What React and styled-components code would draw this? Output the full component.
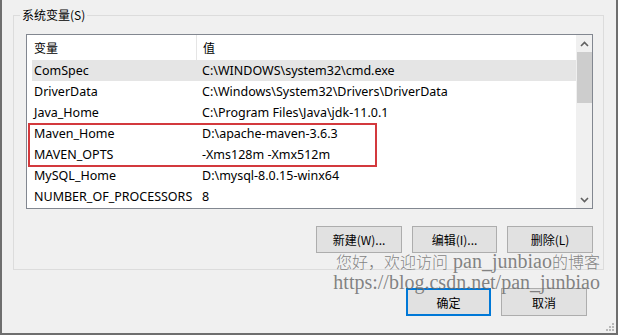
import React from 'react';
import styled, { createGlobalStyle } from 'styled-components';

const GlobalStyle = createGlobalStyle`
  html, body {
    margin: 0;
    padding: 0;
    background: #f0f0f0;
  }
  body {
    font-family: "Noto Sans", "Noto Sans CJK SC", sans-serif;
    font-size: 12px;
    color: #000;
  }
`;

const Window = styled.div`
  position: relative;
  box-sizing: border-box;
  width: 618px;
  height: 335px;
  background: #f0f0f0;
  border: 2px solid #6e6e6e;
  border-top: none;
  display: flex;
  flex-direction: column;
  overflow: hidden;
`;

const Group = styled.fieldset`
  min-width: 0;
  margin: 7px 12px 0 11px;
  padding: 11px 10px 16px 12px;
  border: 1px solid #dcdcdc;
  display: flex;
  flex-direction: column;
`;

const Legend = styled.legend`
  margin-left: -6px;
  padding: 0 2px;
  line-height: 16px;
  font-family: "Noto Sans CJK SC", sans-serif;
  color: #000;
`;

const ListBox = styled.div`
  box-sizing: border-box;
  height: 175px;
  border: 1px solid #828790;
  background: #fff;
  display: flex;
`;

const ListContent = styled.div`
  flex: 1;
  display: flex;
  flex-direction: column;
  padding-left: 5px;
  font-size: 12.5px;
`;

const HeaderRow = styled.div`
  display: flex;
  height: 25px;
  align-items: center;
  font-family: "Noto Sans CJK SC", sans-serif;
  font-size: 12px;
`;

const HeaderCell = styled.div`
  box-sizing: border-box;
  width: ${({ $w }) => ($w ? `${$w}px` : 'auto')};
  flex: ${({ $w }) => ($w ? 'none' : '1')};
  height: 100%;
  display: flex;
  align-items: center;
  padding-left: ${({ $pad }) => $pad}px;
  border-right: ${({ $divider }) => ($divider ? '1px solid #e5e5e5' : 'none')};
`;

const Row = styled.div`
  display: flex;
  height: 21px;
  align-items: center;
  background: ${({ $hover }) => ($hover ? '#e5e5e5' : 'transparent')};
  white-space: nowrap;
`;

const NameCell = styled.div`
  box-sizing: border-box;
  width: 164px;
  padding-left: 2px;
`;

const ValueCell = styled.div`
  flex: 1;
  padding-left: 6px;
`;

const Marked = styled.div`
  position: relative;
  &::after {
    content: '';
    position: absolute;
    left: -4px;
    top: 0;
    bottom: -2px;
    width: 345px;
    border: 2px solid #d3393d;
  }
`;

const ScrollBar = styled.div`
  width: 16px;
  background: #f0f0f0;
  display: flex;
  flex-direction: column;
  align-items: center;
`;

const Arrow = styled.div`
  height: 17px;
  width: 100%;
  display: flex;
  align-items: center;
  justify-content: center;
  margin-top: ${({ $bottom }) => ($bottom ? 'auto' : '0')};
`;

const Thumb = styled.div`
  width: 15px;
  height: 51px;
  background: #cdcdcd;
`;

const ButtonRow = styled.div`
  display: flex;
  justify-content: flex-end;
  gap: 10px;
  margin-top: 17px;
`;

const Button = styled.button`
  box-sizing: border-box;
  width: ${({ $w }) => $w || 86}px;
  height: ${({ $h }) => $h || 27}px;
  padding: 0;
  background: #e1e1e1;
  border: ${({ $default }) => ($default ? '2px solid #0078d7' : '1px solid #adadad')};
  font-family: "Noto Sans CJK SC", sans-serif;
  font-size: 12px;
  color: #000;
`;

const Footer = styled(ButtonRow)`
  margin-top: 18px;
  padding-right: 29px;
`;

const Watermark = styled.div`
  position: absolute;
  right: 16px;
  top: 251px;
  text-align: right;
  font-family: "Liberation Serif", "Noto Sans CJK SC", serif;
  font-size: 20px;
  line-height: 21px;
  color: rgba(110, 110, 110, 0.85);
  white-space: nowrap;
  pointer-events: none;
`;

const Cjk = styled.span`
  font-family: "Noto Sans CJK SC", serif;
  font-size: 16px;
  font-weight: 300;
`;

const Grip = styled.svg`
  position: absolute;
  right: 1px;
  bottom: 1px;
`;

const Chevron = ({ down }) => (
  <svg width="9" height="6" viewBox="0 0 9 6">
    <path
      d={down ? 'M1 1 L4.5 4.5 L8 1' : 'M1 5 L4.5 1.5 L8 5'}
      fill="none"
      stroke="#606060"
      strokeWidth="1.6"
    />
  </svg>
);

const vars = [
  ['ComSpec', 'C:\\WINDOWS\\system32\\cmd.exe'],
  ['DriverData', 'C:\\Windows\\System32\\Drivers\\DriverData'],
  ['Java_Home', 'C:\\Program Files\\Java\\jdk-11.0.1'],
  ['Maven_Home', 'D:\\apache-maven-3.6.3'],
  ['MAVEN_OPTS', '-Xms128m -Xmx512m'],
  ['MySQL_Home', 'D:\\mysql-8.0.15-winx64'],
  ['NUMBER_OF_PROCESSORS', '8'],
];

const renderRow = ([name, value], i) => (
  <Row key={name} $hover={i === 0}>
    <NameCell>{name}</NameCell>
    <ValueCell>{value}</ValueCell>
  </Row>
);

const App = () => {
  return (
    <>
      <GlobalStyle />
      <Window>
        <Group>
          <Legend>系统变量(S)</Legend>
          <ListBox>
            <ListContent>
              <HeaderRow>
                <HeaderCell $w={165} $pad={2} $divider>变量</HeaderCell>
                <HeaderCell $pad={6}>值</HeaderCell>
              </HeaderRow>
              {vars.slice(0, 3).map(renderRow)}
              <Marked>{vars.slice(3, 5).map((v, i) => renderRow(v, i + 3))}</Marked>
              {vars.slice(5).map((v, i) => renderRow(v, i + 5))}
            </ListContent>
            <ScrollBar>
              <Arrow><Chevron /></Arrow>
              <Thumb />
              <Arrow $bottom><Chevron down /></Arrow>
            </ScrollBar>
          </ListBox>
          <ButtonRow>
            <Button $w={86}>新建(W)...</Button>
            <Button $w={85}>编辑(I)...</Button>
            <Button $w={86}>删除(L)</Button>
          </ButtonRow>
        </Group>
        <Footer>
          <Button $w={85} $h={28} $default>确定</Button>
          <Button $w={86} $h={28}>取消</Button>
        </Footer>
        <Watermark>
          <Cjk>您好，欢迎访问</Cjk> pan_junbiao<Cjk>的博客</Cjk>
          <br />
          https://blog.csdn.net/pan_junbiao
        </Watermark>
        <Grip width="11" height="11" viewBox="0 0 11 11">
          {[[8, 2], [8, 5], [5, 5], [8, 8], [5, 8], [2, 8]].map(([x, y]) => (
            <rect key={`${x}-${y}`} x={x} y={y} width="2" height="2" fill="#b8b8b8" />
          ))}
        </Grip>
      </Window>
    </>
  );
};

export default App;
